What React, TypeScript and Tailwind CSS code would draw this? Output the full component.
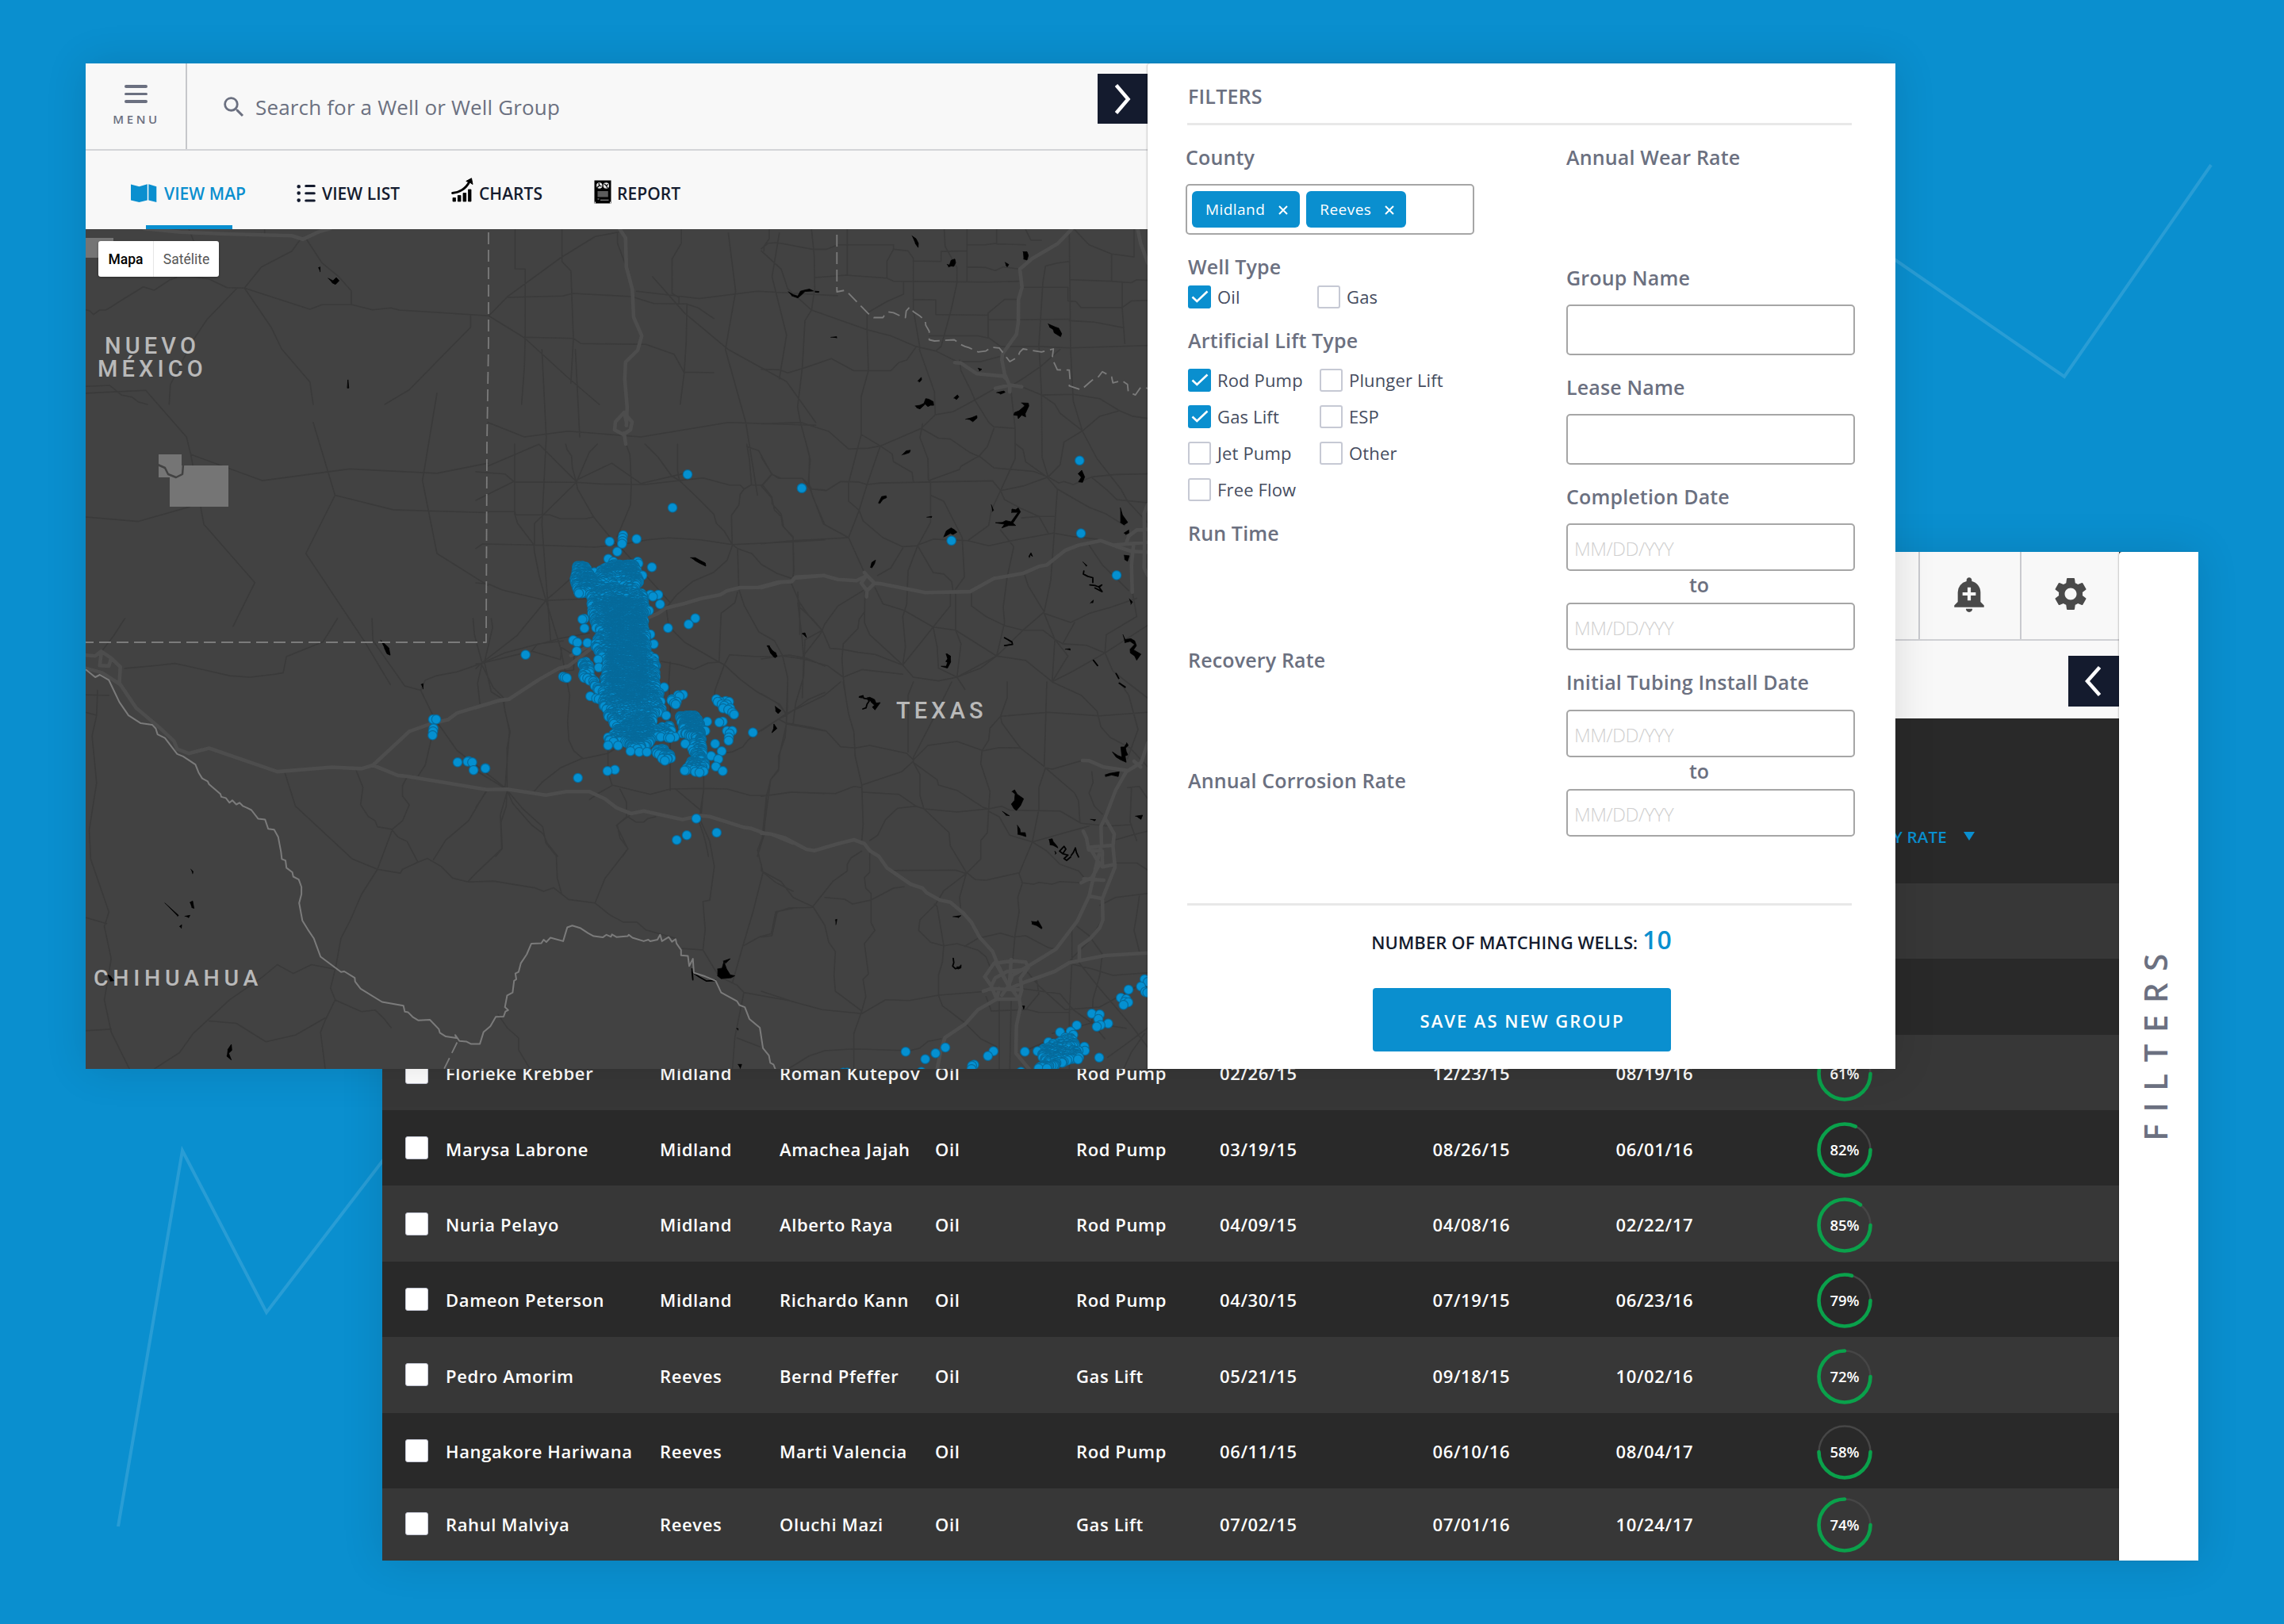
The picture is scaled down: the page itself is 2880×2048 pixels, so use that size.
import { ReactNode } from "react";
import { MdAddAlert, MdSearch, MdSettings } from "react-icons/md";

/* ------------------------------------------------------------------ */
/* Map geometry                                                        */
/* ------------------------------------------------------------------ */

type Pt = [number, number];
// A sheet is a tile of survey coordinates: origin in page pixels and units per pixel.
type Sheet = [number, number, number, number];

const NW: Sheet = [100, 70, 1.96, 3];
const CORE: Sheet = [600, 560, 3, 3];
const SW: Sheet = [100, 780, 1.7422, 2.7034];
const NE: Sheet = [960, 280, 3, 2.6133];
const SE: Sheet = [960, 860, 3, 3];
const PAGE: Sheet = [0, 0, 1, 1];
const WIDE: Sheet = [0, 0, 0.54444, 0.54444];

const parse = (s: string, [ox, oy, sx, sy]: Sheet): Pt[] =>
  s
    .trim()
    .split(/\s+/)
    .map((p) => {
      const [x, y] = p.split(",").map(Number);
      return [ox + x / sx, oy + y / sy];
    });

const toPath = (s: string, sheet: Sheet) =>
  "M" + parse(s, sheet).map(([x, y]) => `${x.toFixed(1)} ${y.toFixed(1)}`).join("L");

const group = (sheet: Sheet, lines: string[]) => lines.map((l) => toPath(l, sheet)).join("");

const MINOR = [
  group(NW, [
    "270,655 285,710 345,770", "545,698 525,740 450,800 408,880 390,880", "563,698 600,785 640,835 672,890 672,942",
    "270,835 320,845 365,878 408,880 570,960 600,943 672,942 725,962 770,955 790,963 967,980 1012,985",
    "16,962 25,965 35,980 50,963 65,963 80,950 100,930 158,875 185,888 225,848 240,840",
    "390,880 315,1000 280,1080 225,1245 222,1320", "408,880 475,1030 500,1110 570,1235 578,1320",
    "967,980 967,1028 815,1265 755,1320", "1012,985 1060,910 1190,765 1275,685 1332,668",
    "1012,985 1100,1068 1205,1215 1285,1320", "1060,915 1195,910 1220,900 1365,912 1420,938 1500,940 1530,955 1568,995",
    "1077,660 1077,807 1102,808 1102,1068 1100,1180 1093,1320", "1193,660 1193,780 1215,815 1221,1070 1215,1240",
    "1100,1066 1221,1070 1240,1090 1400,1093 1470,1130 1495,1200 1485,1320", "1495,1198 1568,1200",
    "1488,660 1488,710 1465,770 1465,900 1482,915 1482,938", "1502,940 1500,1080 1495,1198", "1330,670 1330,710 1352,800",
    "16,1252 75,1248 105,1285 130,1292 145,1310 168,1320", "458,655 458,672",
  ]),
  group(WIDE, [
    "59,270 100,268 128,300 131,312 180,330 240,322 300,325 335,318", "131,312 140,360 175,400 160,430", "215,290 230,340 210,380 250,440 268,470",
    "300,270 290,330 300,380 335,402", "59,355 95,358 130,348", "230,340 270,350 335,352", "335,290 360,300 390,296 440,300 500,290 560,292",
    "335,320 370,305 395,330 420,318 440,332 470,325", "372,240 375,300 372,360 378,440", "395,240 398,300", "448,190 470,215 500,240 540,262 560,290",
    "500,160 505,200 498,240 512,290 520,340", "437,200 480,205 520,200 575,203", "535,160 530,190 540,230 535,260",
  ]),
  group(CORE, [
    "0,105 110,113 145,143 380,145 470,151 640,153 770,138 860,128 960,155 1000,155 1015,170 1040,155 1085,155 1120,115 1155,130 1235,130 1265,170 1320,173",
    "147,0 147,265 158,300 220,382 222,410 240,500 265,590 320,770 340,870 355,950 347,1050 352,1120 370,1160 405,1190",
    "340,0 345,20 362,45 365,90 380,145 385,170 445,275 510,355 560,405 700,560 735,600", "460,0 430,30 380,145 222,300 222,380", "0,213 140,143",
    "40,256 148,256 150,267 280,268 320,283 415,283 447,275", "0,395 25,378 222,382 450,390 560,378 650,362 730,355 850,362 970,380 1200,370 1320,362",
    "570,5 583,40 588,150 585,230 535,350", "640,0 690,50 740,120 770,138 830,195 900,265 910,300 940,330 970,380 990,395 995,550 1015,610 1070,710 1130,745 1160,800 1180,885 1178,1010",
    "763,0 763,100 770,138", "970,380 967,270 995,230 1000,190 1015,170", "1025,0 1035,60 1043,155", "1025,10 1070,25 1120,115", "1250,0 1265,60 1258,140 1275,200 1320,305",
    "1085,155 1120,200 1120,225 1155,265 1165,315 1200,350 1203,480 1195,530 1225,600 1225,720",
    "990,395 1045,415 1080,455 1140,490 1200,510", "970,385 950,440 900,485 820,520 760,570 720,620 730,690 790,750 920,825 940,835 1000,890 1060,935 1150,985 1175,1025",
    "0,525 50,530 100,552 265,592 430,585", "265,590 290,570 380,490", "265,592 155,725 20,830 0,832", "20,830 65,920 105,960 110,1010 130,1090 118,1150 118,1310 140,1360 210,1440 255,1475 270,1510 310,1560",
    "0,850 20,830 110,790 240,755 330,745", "210,785 230,760 320,735 430,715", "210,783 320,815 325,770 372,800 370,855 320,860",
    "990,560 980,600 928,640 920,825", "920,825 880,828 825,852 770,835 700,822", "735,825 730,900 735,1000 735,1310", "920,825 940,835 960,797 1050,803 1120,805 1185,798 1250,810 1320,840",
    "1225,600 1260,650 1310,705 1245,740 1240,880 1210,980 1200,1060", "1320,940 1260,965 1175,1025 1145,1040 1180,1060 1320,1085", "940,835 905,930 900,975",
    "1178,1010 1170,1110 1145,1180 1145,1230 1115,1270 1100,1330 1090,1480 1065,1560", "1145,1040 1060,1095 1030,1120 1010,1145 970,1165 930,1170",
    "405,1190 500,1170 560,1130", "405,1188 320,1225 250,1280 220,1315", "500,1130 500,1240 515,1290 660,1325 735,1305 860,1303 950,1305 1040,1330 1105,1330 1195,1317 1320,1322",
    "515,1292 465,1320 430,1345", "545,1305 570,1355 570,1410 535,1440 545,1490 575,1530 555,1560", "755,1305 850,1385 862,1310 862,1230", "850,1385 845,1430 862,1480 870,1510 880,1560",
    "575,1410 605,1430 635,1430 650,1417 680,1410", "0,1375 40,1315", "118,1310 115,1370 95,1430 100,1530 75,1560", "0,1235 115,1305",
  ]),
  group(SW, [
    "100,0 75,60 45,120", "567,0 535,80 455,130 448,185 430,190 375,200 330,195 245,165 210,153 170,160 100,170", "643,0 645,75 715,230 750,245 780,340 830,450 940,582",
    "750,245 760,210 785,195 830,182 885,152 970,120", "865,0 868,55 885,152 875,220 880,290", "905,0 908,30 890,150 905,250 930,275 945,385 935,580", "775,400 760,500 745,535",
    "452,528 475,640 600,820 655,855 705,868 710,855 745,830 765,818 795,845 820,885 855,898 910,895 1000,918 1020,930 1042,918 1060,940 1075,958 1133,970 1165,1010 1195,1035 1225,1035 1245,1062 1310,1090",
    "608,517 623,575 618,635 635,675 650,690 655,710 685,718 700,745 720,760 743,828", "720,540 710,570 710,605 725,635 710,690 688,718 655,855 620,940 595,1030 575,1090 563,1190 552,1260 562,1300 540,1370 530,1410 540,1535",
    "893,590 855,690 805,755 778,822", "940,590 925,670 928,785 870,870 855,895", "945,595 975,650 1018,710 1025,765 1048,810 1050,885 1060,940", "1210,670 1180,705 1205,785 1155,885 1133,970",
    "40,245 38,330 28,400 38,560 22,720 25,820 65,1000 55,1050 70,1160 55,1300 70,1410 110,1535", "15,1020 60,1040", "15,260 65,262", "15,320 38,330",
    "165,1535 220,1480 250,1415 330,1300 400,1225 435,1180 470,1210 510,1180 560,1195", "285,1372 345,1380 410,1443 475,1420 540,1362", "15,1405 70,1400",
    "562,1300 590,1320 620,1340 650,1335 670,1365 685,1395", "920,1350 940,1395 965,1430 965,1470 990,1535",
    "1370,600 1365,690 1385,760 1395,845 1385,960 1370,965 1375,1060 1370,1130 1325,1125", "1510,600 1500,750 1490,790 1502,865 1480,1000 1457,1120 1435,1240", "1502,865 1530,900 1568,930", "1568,988 1530,1000 1520,1075 1495,1085 1460,1115",
    "1370,1130 1405,1220 1445,1250 1460,1275 1568,1305", "1460,1275 1440,1430 1435,1535", "1445,1430 1495,1460",
  ]),
  group(NE, [
    "0,88 25,70 60,68 195,90 245,90 290,75 500,75 500,90 555,95 575,120 575,290 600,415 598,420", "0,95 75,155 100,220 190,290 400,355 490,375 585,410 660,425 740,460 830,460 915,440", "30,25 30,55 10,80 10,95",
    "190,25 200,110 202,220 190,290 165,325 155,480 137,610 148,660 182,770 180,870 235,995 330,1040", "325,25 325,175", "205,183 320,175 475,185 500,195 860,198 980,195", "500,90 475,130 475,185",
    "400,355 400,300 475,262 538,238 538,198", "400,355 405,490 378,575 378,700 360,760 330,860 330,920 370,950 385,985 460,1040 535,1070 590,1067",
    "0,485 70,487 100,497 155,483 265,450 350,490 490,490 520,463 550,455 585,412", "598,420 655,560 658,635 605,680 450,738 405,745 330,748 255,690 148,660 0,665",
    "575,128 680,130 680,97 778,95", "692,25 695,80 740,150 740,200 718,290 680,410 660,425", "778,25 778,195", "778,75 845,75 890,70 890,25", "778,148 850,150 885,160 915,148 975,155", "890,72 1000,75",
    "575,255 660,257 660,305 858,307", "858,300 920,255 975,255", "858,300 858,380 905,410 1050,410", "635,375 820,375 858,382", "858,322 975,322 1165,320", "1165,30 1170,420 1180,590 1215,690 1270,780 1360,880 1385,920 1460,990",
    "985,215 1160,215 1160,260 1190,262 1210,282 1365,282 1400,260 1460,258", "1170,190 1320,195 1400,200 1420,190 1460,192", "1325,105 1325,195", "1365,200 1365,282 1375,400", "1050,410 1165,415 1460,407", "1165,325 1260,330 1370,348",
    "1185,25 1240,75 1325,105 1410,115 1410,25", "1060,60 1020,60 1000,25", "1165,130 1120,135 1075,145 1065,200 1050,405 1055,480 1060,570 1062,775 1085,840", "1050,480 1000,510 945,540", "1052,480 1130,420",
    "985,543 1060,570 1110,600 1130,630 1215,688 1145,725 1130,800 1085,840", "1062,570 1180,568 1280,582 1355,622 1405,640 1460,647", "1355,622 1280,640 1215,688",
    "750,455 755,490 790,550 810,590 860,660 880,675 960,680", "945,560 960,680 960,780 905,885", "885,548 800,590 725,625 658,635", "610,665 600,710 630,780 632,850 640,855 640,990 590,1070 555,1150 550,1260 535,1300 545,1400 535,1460",
    "378,700 450,738 495,765 500,790 570,825 575,855", "605,680 670,712 715,715 790,760 830,775 880,810 1030,822 1085,840", "880,680 855,740 825,770 755,805 750,815 640,850", "960,730 990,750 1000,790 1080,840 1120,880 1110,1000 1095,1180 1070,1285",
    "0,870 40,830 0,775", "40,830 65,845 155,845 180,865 190,880 245,885 300,855 370,857 400,865 450,860 875,853 905,885 920,915 985,945 1050,970 1085,1025",
    "450,738 400,865 370,950 330,1040 120,1050 0,1060", "0,870 40,910 50,950 75,970 80,1000 120,1040 122,1160", "330,1040 395,1165", "590,1065 600,1080 650,1155 690,1160 720,1185 725,1215", "640,900 690,920 760,1040 768,1170 735,1210",
    "905,885 870,950 860,1000 780,1050", "590,1065 650,1045 780,1050 860,1067 960,1048 1105,1025 1180,1037 1270,1045", "905,885 990,870 1085,840 1125,860 1145,855 1180,865 1250,840 1340,832 1460,830", "1120,880 1240,940 1300,960 1375,1000",
    "1250,842 1310,885 1345,915 1460,925", "905,1015 955,1070 930,1170 915,1270 920,1320 890,1430 740,1500", "985,975 1050,970 1110,970",
    "440,1165 490,1140 535,1075", "430,1205 460,1258 540,1280 650,1335 735,1345 890,1430 1000,1445 1100,1515", "385,1215 290,1265 240,1325 225,1355 150,1440", "392,1220 390,1320 410,1360 535,1460", "390,1285 370,1310 365,1340 310,1390 305,1440 310,1500 320,1568",
    "138,1220 140,1265 195,1310 230,1345 260,1405 305,1408 365,1418 430,1425 535,1460 575,1500 670,1512 740,1500 830,1470 890,1430", "138,1255 155,1380 160,1440 155,1568", "0,1440 80,1430 160,1440 250,1462 310,1500 380,1475 535,1490",
    "715,1225 715,1265 650,1335 535,1460", "735,1225 735,1345 755,1390 740,1500", "650,1335 665,1400 670,1470 740,1500 770,1540", "795,1225 795,1265 850,1300 920,1330 990,1345 1065,1345 1110,1375 1140,1390 1230,1395 1300,1420",
    "995,1160 1010,1200 1070,1285 990,1345 890,1430", "1070,1290 1110,1375 1160,1430 1100,1515 1110,1380", "1070,1290 1170,1320 1240,1290 1320,1270 1420,1240", "1140,1390 1185,1320", "1460,1330 1300,1420 1305,1360 1420,1300 1405,1225",
    "1300,1420 1330,1480 1460,1568", "1300,1420 1180,1480 1100,1515", "1240,1065 1290,1130 1390,1215",
  ]),
  group(SE, [
    "0,45 60,80 95,120 100,0", "0,185 95,120 240,50 300,0", "95,120 95,155 190,172 245,185 300,245 355,250 410,240 550,270 575,295 600,270 630,240 740,225 840,260 900,248 980,250", "310,0 330,120 350,190 355,280 380,390 385,540 380,600",
    "95,160 70,270 65,335 35,370 10,560", "555,265 555,50 575,0", "720,0 650,140 575,285 575,305 600,350 600,430 615,480", "575,305 665,370 670,390 740,410 840,475 860,480 910,470 940,485 1130,488 1210,535 1310,545 1400,540",
    "0,433 110,417 280,422 350,395 380,400", "380,390 530,340 575,300", "385,417 520,425 585,470 615,480 740,492 860,480", "615,480 710,570 715,620 775,720 810,748 850,750 975,722",
    "585,470 515,478 470,520 440,580 410,600", "860,480 855,570 830,600 830,670 775,725 690,790 660,840 600,900 595,940 640,985 690,998", "775,725 750,815 755,870", "930,0 930,60 905,130 910,155 980,250 1070,320 1080,0",
    "905,130 865,175 860,220 835,260 830,310 865,415 860,480", "905,130 1085,115 1280,128 1460,115", "1100,0 1210,50 1270,110 1285,170 1320,210 1395,250 1460,320", "1355,0 1390,50 1425,180 1385,290", "1075,325 1050,400 1050,480 1025,605 975,725 988,760 970,815 975,870 960,955 950,1060",
    "1075,325 1100,330 1215,297", "1075,325 1185,420 1200,450 1205,530", "860,490 900,510 940,580 1025,605 1080,640 1130,690 1200,715 1225,745", "1025,605 1150,570 1240,545", "985,760 1030,765 1050,758 1100,765 1130,755 1210,760",
    "500,713 735,712 775,725", "0,690 0,715 75,755 120,815 195,850 240,920 255,985 280,1020 275,1110 280,1170 380,1245", "195,850 270,755 325,715 325,690 340,665 380,640", "410,640 410,720 390,740 395,780 415,800 415,910 430,940 390,990 405,1105 385,1125 395,1190 380,1245",
    "240,815 315,822 345,840 415,825 500,780 540,775", "195,853 105,855 60,870 40,960 0,965", "690,998 665,850 655,840", "690,998 740,990 820,1015 850,1040 870,1090", "690,998 685,1060 670,1110 670,1185 685,1225 770,1290 830,1350 890,1380",
    "770,1000 820,970 905,950 955,965 1000,960 1085,1005 1110,1010", "0,1170 120,1210 230,1240 380,1255 470,1202 560,1205 670,1185 860,1170", "380,1245 350,1330 350,1465", "100,1465 180,1415 240,1395 350,1388 560,1395 600,1385 630,1360 680,1350",
    "1250,340 1255,380 1240,420 1260,470 1290,500", "1340,685 1420,685 1460,710", "1330,600 1400,580 1460,565", "1280,845 1340,815 1460,800", "1430,810 1420,880 1410,940 1430,1020", "1290,900 1240,980 1170,1050",
    "1175,930 1175,1060 1165,1260 1165,1465", "1195,925 1240,960 1290,1030 1280,1110 1255,1200 1250,1290", "1165,1065 1250,1085 1330,1110 1460,1100", "1200,1060 1280,1160 1400,1300 1460,1380", "985,1160 1130,1180 1180,1240 1250,1290 1300,1350",
    "1040,1120 1050,1180 1000,1240 870,1245 850,1190", "900,1210 900,1465", "945,1205 940,1465", "1000,1090 1050,1150 1150,1240 1280,1230 1460,1130", "1165,1250 1050,1250 990,1235", "1100,1330 1250,1290 1380,1310", "1310,1420 1380,1370 1460,1310", "1370,1465 1400,1400 1450,1330", "1010,1390 1100,1350",
    "1400,400 1395,530 1420,600", "1385,400 1430,395 1460,440",
  ]),
].join("");

const HIGHWAYS = [
  group(NW, ["160,655 250,668 360,675 525,682 553,695 595,665 620,655", "1335,655 1350,690 1352,800 1367,885 1370,990 1390,1060 1380,1115 1350,1160 1348,1225 1354,1330 1352,1400"]),
  group(PAGE, ["790,533 787,520 776,532 775,542 786,548 795,542 797,532 790,524", "787,546 789,560"]),
  group(NE, [
    "1172,25 1120,72 1025,120 978,155 986,215 973,255 972,330 965,370 912,435 910,455 920,500 940,540 940,560", "732,463 755,465 815,500 915,508 925,515", "885,548 940,537 985,543", "1424,25 1435,70 1462,135",
    "0,1205 75,1187 115,1185 130,1170 235,1165 290,1178 360,1182 400,1165", "390,1155 400,1165 428,1190 400,1215 378,1190 395,1168", "400,1210 398,1235",
    "425,1190 450,1192 620,1221 790,1218 880,1175 990,1158 1050,1135 1080,1130 1150,1082 1200,1065 1285,1050 1340,1068 1400,1085 1460,1088", "1330,1065 1462,1055", "1380,1060 1390,1035 1420,1015 1462,1013", "1462,930 1448,960 1450,1050 1448,1140 1462,1165", "1408,1065 1400,1130 1403,1220",
  ]),
  group(CORE, ["1320,497 1205,507 1195,520 1145,522 1070,542 1000,543 950,555 925,570 850,585 790,603 720,620 690,640 600,680 500,730 435,775 370,825 350,840 315,848 240,890 125,965 95,968 0,997", "360,800 435,760"]),
  group(SW, [
    "945,275 920,280 830,322 810,345 770,360 725,385 645,500", "15,125 35,128 48,112 70,135 90,165 88,220 125,305 175,370 208,418 215,445 240,460 265,450 285,442 435,522 555,507 620,512 645,500 700,535 720,538 895,583 940,582 1025,602 1070,590 1120,590 1155,615 1180,645 1212,665 1240,656 1325,685 1365,672 1385,675 1460,712 1475,715 1505,732 1520,735 1568,765",
    "48,120 45,160 65,162 70,135", "15,170 50,185 90,225",
  ]),
  group(SE, [
    "0,572 35,575 90,590 170,633 200,638 290,612 350,597 390,612 410,638 445,660 475,703 565,765 610,780 625,797 675,825 715,833 765,875 795,910 825,965 875,1020 895,1070 935,1150",
    "1462,230 1437,305 1380,340 1340,410 1300,515 1285,545 1287,620 1270,680 1240,810 1195,905 1115,1010 1010,1075 950,1110 935,1150", "1215,297 1240,298 1295,322 1385,335", "1410,300 1435,322",
    "1300,515 1335,575 1330,620 1338,700 1310,770 1290,820 1292,900 1280,930 1245,970 1203,1000 1203,1050", "1218,565 1230,590 1238,635 1290,640 1290,700 1338,690", "1245,625 1330,618", "1250,640 1280,690 1250,740 1210,760", "1220,745 1295,750", "1240,810 1290,820",
    "1462,1025 1300,1035 1165,1062 1110,1095 985,1140 940,1160", "840,1170 870,1160 975,1165", "845,1115 880,1065 950,1055 1000,1060 1010,1080 980,1120 985,1165 975,1200 890,1200 870,1150 845,1115", "870,1150 885,1120 930,1095 980,1090", "945,1050 938,1150 975,1200", "885,1060 935,1150 910,1185",
    "900,1160 890,1200 820,1240 770,1295 695,1345 680,1390 665,1465", "975,1195 980,1230 965,1300 963,1405 1018,1470",
  ]),
].join("");

const RIVER = toPath(
  "15,175 35,200 45,192 65,210 88,285 108,330 135,357 160,362 168,375 172,395 188,407 215,462 228,470 255,498 262,525 270,545 282,555 285,565 310,598 312,608 322,612 330,628 336,620 345,634 352,628 360,640 368,645 378,653 393,683 408,685 415,717 428,720 437,745 443,795 445,820 453,825 455,850 468,865 470,880 482,890 488,915 488,940 483,970 490,1030 502,1060 515,1090 530,1153 575,1205 582,1203 605,1225 606,1238 618,1262 665,1307 712,1320 715,1340 722,1342 732,1358 745,1370 770,1368 790,1400 792,1412 805,1425 828,1430 826,1420 835,1440 850,1442 860,1450 880,1450 888,1410 903,1390 915,1358 932,1357 936,1340 942,1335 935,1325 940,1285 952,1275 955,1235 960,1230 958,1210 965,1205 970,1175 983,1145 993,1108 1015,1107 1020,1095 1026,1103 1035,1088 1063,1100 1072,1053 1083,1047 1100,1055 1118,1073 1130,1083 1150,1087 1158,1078 1168,1085 1170,1077 1180,1086 1205,1083 1207,1078 1215,1088 1240,1100 1250,1095 1254,1100 1270,1095 1276,1078 1280,1100 1295,1086 1302,1102 1310,1093 1312,1108 1322,1130 1322,1148 1337,1150 1340,1185 1348,1160 1350,1208 1375,1220 1398,1235 1410,1275 1445,1305 1450,1318 1462,1325 1472,1365 1495,1395 1502,1465 1515,1490 1518,1515 1525,1520 1530,1540",
  SW,
);

const BORDER = [
  toPath("616,293 616,430 614,560 613,810 108,810", PAGE),
  toPath("830,1445 800,1540", SW),
  toPath("286,42 286,230 315,225 330,235 405,302 425,315 460,315 465,308 480,296 500,299 520,307 535,314 545,315 548,293 562,280 575,295 600,310 620,325 622,340 635,360 635,388 655,392 690,390 730,388 755,404 770,410 785,414 820,428 850,425 870,413 900,415 940,460 970,445 978,428 990,418 1060,428 1105,418 1100,450 1120,487 1165,488 1168,520 1165,540 1210,553 1240,530 1260,515 1275,510 1290,493 1325,510 1330,530 1365,523 1385,535 1388,560 1415,570 1435,545 1462,548", NE),
].join("");

const LAKES = [
  group(NW, ["591,803 595,800 595,818", "615,843 627,852 635,840 642,852 633,866 625,860", "664,1228 666,1258 663,1258"]),
  group(NE, [
    "570,46 585,55 594,70 593,84 582,70", "703,140 712,142 718,126 732,122 735,134 728,146 718,145 708,148", "922,133 936,140 930,148 925,142", "990,98 1005,98 1010,110 1005,125 992,122", "102,230 122,240 138,244 148,228 165,224 182,221 197,227 165,229 152,240 138,250 115,243", "203,228 218,229 217,232 204,231",
    "263,380 285,378 285,382", "1085,336 1112,346 1125,350 1136,368 1132,378 1108,365 1104,354 1090,346", "820,482 834,485 825,491", "592,524 605,512 606,520 598,528", "582,606 600,604 615,598 622,582 634,584 650,592 652,604 640,604 630,608 620,600 600,616 588,612", "728,580 742,570 747,576 738,585", "890,562 918,557 922,561 905,567", "984,596 1010,597 1012,606 998,632 1000,642 985,636 972,648 970,638 955,636 958,628 975,622 996,606",
    "773,650 795,645 815,638 816,646 800,658 790,652", "532,768 548,754 564,752 560,760 540,766", "1198,830 1212,818 1223,840 1215,858 1200,856 1210,842", "443,926 455,905 472,902 474,908 460,914 448,928", "870,932 878,950 874,954", "947,958 948,946 962,948 972,942 980,955 965,975 952,992 962,1000 935,1000 910,1008 920,996 886,991 912,990 925,984 945,988 970,958", "690,1038 700,1018 718,1008 730,1014 740,1022 725,1030 715,1026 695,1036", "626,973 645,970 643,974",
    "1358,942 1366,965 1386,990 1372,998 1358,990", "1372,1025 1390,1015 1390,1025 1378,1030", "1372,1098 1392,1100 1385,1118 1374,1112", "1012,1102 1020,1090 1026,1102 1018,1096 1014,1106", "1216,1120 1232,1132 1228,1134", "1392,1242 1404,1252 1398,1260",
    "1244,1256 1256,1246 1254,1255",
    "413,1138 418,1122 432,1114 428,1126 418,1140", "155,1356 165,1354 170,1368", "22,1396 30,1398 40,1410 60,1430 52,1436 34,1420", "698,1424 715,1430 716,1450 704,1470 680,1464 700,1464 706,1446", "1150,1408 1168,1406 1168,1411", "1368,1360 1376,1376 1398,1373 1412,1380 1419,1396 1408,1410 1436,1424 1420,1444 1412,1430 1396,1420 1395,1408 1412,1392 1395,1382 1375,1386", "370,1566 385,1560 388,1568",
  ]),
  group(CORE, ["812,430 830,430 852,442 868,450 870,462 845,450 828,440", "1102,765 1110,762 1114,778 1135,790 1139,804 1128,806 1115,790 1110,776", "1235,718 1244,716 1250,731", "1132,992 1145,1002 1154,1008 1144,1020 1134,1010", "1128,1060 1139,1076 1120,1092 1126,1078"]),
  group(SW, ["662,75 672,88 680,100 683,125 676,120 670,100", "751,225 755,222 755,240", "245,855 250,862 249,870", "243,968 249,963 252,988 247,985", "188,970 218,1012 216,1015", "232,1015 243,1012 240,1020", "220,1050 225,1044 224,1056", "62,1215 68,1218 76,1235 68,1236", "326,1470 334,1452 335,1472 328,1482 334,1505 324,1492", "1402,1195 1412,1192 1416,1170 1422,1195 1430,1215 1440,1218 1432,1225 1410,1228 1402,1218", "1447,1520 1455,1520 1452,1534", "1444,1398 1447,1398 1447,1403", "1415,1168 1430,1160 1420,1175"]),
  group(SE, [
    "370,55 385,52 378,60", "400,60 410,58 428,66 434,80 450,78 430,106 420,95 428,88 415,76", "1382,230 1388,240 1378,250 1380,262 1386,276 1376,280 1380,304 1358,294 1342,284 1328,265 1348,278 1364,284 1360,246 1372,246", "1300,352 1318,346 1354,340 1350,358 1325,352 1302,358", "948,415 958,408 968,425 992,442 980,468 965,486 956,480 946,462 958,448 960,425", "912,490 938,506 925,504", "968,542 978,556 980,570 998,570 1001,585 985,580 970,576", "1088,596 1100,593 1104,604 1118,620 1122,628 1104,618 1092,616",
    "1110,640 1116,648 1112,652", "1022,906 1042,908 1046,902 1062,930 1060,934 1042,922 1024,916", "725,888 755,884 745,892", "280,900 286,898 282,918", "1245,520 1265,521 1260,526", "1415,508 1442,504 1436,520 1425,512", "988,1226 996,1226 992,1238", "740,1078 748,1078 756,1070 755,1082 745,1086",
  ]),
].join("Z") + "Z";

const CREEKS = [
  group(SE, [
    "1138,648 1128,640 1145,622 1152,632 1140,650 1160,655 1145,668 1155,675 1170,662", "1172,656 1180,646 1188,628 1192,645 1200,662", "726,1046 728,1062 724,1075 734,1085 745,1082", "1356,6 1376,20",
    "388,62 402,64 408,72 400,84 396,98 384,102",
  ]),
  group(SW, ["1346,1195 1348,1232 1346,1205 1362,1222 1378,1236 1398,1234"]),
  group(NE, [
    "1220,1150 1218,1160 1235,1168 1254,1172 1254,1188", "1243,1196 1262,1198 1275,1202 1288,1196 1278,1204 1289,1218 1262,1206", "920,1370 948,1384 950,1392 920,1396", "702,1424 714,1432 700,1448 714,1448", "1256,1444 1272,1462", "1342,1488 1352,1504", "1354,1520 1376,1532",
  ]),
].join("");

/* ------------------------------------------------------------------ */
/* Wells                                                               */
/* ------------------------------------------------------------------ */

const SINGLE_WELLS: Pt[] = [
  ...parse("801,115 1233,167 744,241 506,369 608,359 557,345 555,355 555,367 553,377 535,407 501,434 520,445 612,445 615,452 666,466 630,497 690,570 670,577 697,606 660,570 830,659 805,682 727,696 410,661 403,663 411,697 368,742 384,751 422,752 382,783 188,797 330,880 336,883 344,885 390,565 397,465 660,720 673,757 712,920 784,948 765,950 742,965 756,985 760,975 770,955 740,970 750,980 910,965 925,975 945,972 958,975 940,990 955,1005 970,1015 977,1023 930,985 935,1000 950,985 962,1000 915,975 934,1050 921,1053 950,1085 970,1085 960,1095 957,1110 956,1122 1048,1091 905,1134 930,1162 890,1180 917,1192 908,1220 934,1237 727,1111 735,1112 753,1108 780,1094 700,1108 662,1105 500,1140 538,1141 585,1162 618,1165 647,1165 705,1155 685,1170 725,1175 738,1188 715,1198 526,1232 498,1237 386,1263 834,1417 911,1470 798,1480 760,1498 36,1226 792,1134 720,1027 678,1015 868,1085 875,1050 790,1235 830,1240 862,1238 846,1243 705,1070 730,1065 433,954 455,962 465,965 410,840 413,852 410,885 430,895 447,905 463,815 465,845 440,640 455,695 675,810 655,630 520,525 550,510 605,535 603,545 470,540 448,485 500,1110", CORE),
  ...parse("777,344 784,344 778,375 777,385 776,398 831,490 853,488 863,490 855,486 866,517 892,511", SW),
  ...parse("1204,786 153,877 719,1050 1209,1026 1344,1164", NE),
  ...parse("1389,1164 1450,1125 1462,1135 1436,1152 1452,1172 1460,1175 1360,1195 1380,1200 1388,1212 1375,1210 1370,1222 1250,1255 1280,1258 1275,1275 1312,1292 1283,1298 1269,1304 1193,1299 1130,1325 1170,1322 1180,1335 1150,1345 1086,1363 1045,1397 997,1399 1224,1395 1222,1380 1278,1421 1198,1428 1157,1432 1110,1450 1062,1455 696,1383 659,1405 620,1427 546,1399 878,1397 857,1415 797,1452 805,1448 795,1465 605,1475 310,1478 325,1478 982,1475", SE),
];

// Densely drilled leases, filled with `count` wells each.
const FIELDS: { outline: Pt[]; count: number }[] = [
  { outline: parse("430,562 520,545 630,562 645,640 638,690 645,720 650,790 682,830 680,900 695,940 705,1010 670,1030 668,1100 640,1140 600,1148 565,1130 550,1100 530,1070 500,1030 480,1000 475,960 485,900 495,830 448,760 468,720 445,660", CORE), count: 2600 },
  { outline: parse("480,590 630,600 635,700 640,800 650,960 600,1000 540,980 500,900 500,760", CORE), count: 2400 },
  { outline: parse("382,460 415,460 430,490 475,540 440,555 400,570 385,560 372,510", CORE), count: 260 },
  { outline: parse("465,475 520,455 600,455 615,490 618,525 600,535 540,490 480,520", CORE), count: 300 },
  { outline: parse("510,460 600,460 600,560 440,570 440,520", CORE), count: 180 },
  { outline: parse("560,1060 660,1040 672,1100 650,1145 600,1155 560,1130 500,1125 510,1105", CORE), count: 300 },
  { outline: parse("770,1028 830,1025 850,1060 855,1130 840,1120 790,1095", CORE), count: 320 },
  { outline: parse("820,1120 855,1130 862,1180 870,1235 795,1235 800,1210 830,1190 815,1160", CORE), count: 110 },
  { outline: parse("660,1085 735,1065 745,1105 665,1110", CORE), count: 50 },
  { outline: parse("672,1160 710,1150 745,1180 715,1200", CORE), count: 45 },
  { outline: parse("400,820 425,820 435,870 470,920 480,960 440,900 405,880", CORE), count: 45 },
  { outline: parse("1120,1360 1170,1345 1200,1380 1205,1420 1140,1440 1080,1462 1045,1462 1080,1440 1055,1415 1065,1385", SE), count: 230 },
];

function inside([x, y]: Pt, poly: Pt[]) {
  let hit = false;
  for (let i = 0, j = poly.length - 1; i < poly.length; j = i++) {
    const [xi, yi] = poly[i];
    const [xj, yj] = poly[j];
    if (yi > y !== yj > y && x < ((xj - xi) * (y - yi)) / (yj - yi) + xi) hit = !hit;
  }
  return hit;
}

function drill(): Pt[] {
  let seed = 7;
  const rnd = () => {
    seed = (seed * 16807) % 2147483647;
    return seed / 2147483647;
  };
  const out: Pt[] = [...SINGLE_WELLS];
  for (const { outline, count } of FIELDS) {
    const xs = outline.map((p) => p[0]);
    const ys = outline.map((p) => p[1]);
    const [x0, x1, y0, y1] = [Math.min(...xs), Math.max(...xs), Math.min(...ys), Math.max(...ys)];
    let n = 0;
    while (n < count) {
      const p: Pt = [x0 + rnd() * (x1 - x0), y0 + rnd() * (y1 - y0)];
      if (inside(p, outline)) {
        out.push(p);
        n++;
      }
    }
  }
  return out.sort((a, b) => a[1] - b[1]);
}

const WELLS = drill();

function WellMap() {
  return (
    <svg className="block h-full w-full" viewBox="108 289 1340 1059" fill="none" strokeLinejoin="round" strokeLinecap="round">
      <defs>
        <radialGradient id="well">
          <stop offset="0.66" stopColor="#0490d1" />
          <stop offset="0.84" stopColor="#05699a" />
          <stop offset="1" stopColor="#05699a" stopOpacity="0" />
        </radialGradient>
      </defs>
      <path d={MINOR} stroke="#3a3a3a" strokeWidth="1.6" />
      <path d={HIGHWAYS} stroke="#4d4d4d" strokeWidth="4.6" />
      <g fill="#757575">
        <path d="M108 300H143V325H108Z" />
        <path d="M200 573H229V587H288V639H214V602H200Z" />
        <path d="M199 586L208 590L212 598L222 602L230 598L231 586" stroke="#424242" strokeWidth="2.5" fill="none" />
      </g>
      <path d={LAKES} fill="#000" stroke="#000" strokeWidth="0.8" />
      <path d={CREEKS} stroke="#000" strokeWidth="1.8" />
      <path d={BORDER} stroke="#7b7b7b" strokeWidth="1.8" strokeDasharray="15 7" strokeLinecap="butt" />
      <path d={RIVER} stroke="#7b7b7b" strokeWidth="2" />
      {WELLS.map(([x, y], i) => (
        <circle key={i} cx={x.toFixed(1)} cy={y.toFixed(1)} r="6.8" fill="url(#well)" />
      ))}
    </svg>
  );
}

/* ------------------------------------------------------------------ */
/* Icons                                                               */
/* ------------------------------------------------------------------ */

const MapIcon = () => (
  <svg className="h-[24px] w-[33px]" viewBox="0 0 33 24" fill="#0a8fcf">
    <path d="M0 .5L10.500 3.200L20.800 .3V20.400L10.500 23L0 20.400Z" />
    <path d="M22.300 .3L32.300 3.200V23L22.300 20.400Z" />
  </svg>
);

const ListIcon = () => (
  <svg className="h-[24px] w-[24px]" viewBox="0 0 24 24" fill="none" stroke="#141b2e" strokeLinecap="round">
    <path d="M2.700 3.200h.01M2.700 11.500h.01M2.700 20.600h.01" strokeWidth="4.600" />
    <path d="M11.700 2.600H22.300M11.700 11.800H22.300M11.700 21H22.300" strokeWidth="3" />
  </svg>
);

const ChartIcon = () => (
  <svg className="h-[31px] w-[28px]" viewBox="0 0 28 31" fill="#000">
    <path d="M2 25.500h3.500v4.500H2zM8.300 22.500h3.700v7.500H8.300zM15 19.500H18.700V30H15zM21.500 15H25V30h-3.500z" stroke="#000" strokeWidth=".8" strokeLinejoin="round" />
    <path d="M1.500 19.500C10 19 18.500 14 23 5" fill="none" stroke="#000" strokeWidth="2.800" strokeLinecap="round" />
    <path d="M18.800 4.500L25.500 .8L27 8.500L23.500 6Z" stroke="#000" strokeLinejoin="round" />
  </svg>
);

const ReportIcon = () => (
  <svg className="h-[30px] w-[22px]" viewBox="0 0 22 30">
    <path d="M.5.500H21.500V29.500H.500Z" fill="#000" />
    <path d="M1.500 29.500V27.500M20.500 29.500V27.500" stroke="#f8f8f8" strokeWidth="1" />
    <circle cx="6.800" cy="7" r="3.700" fill="#e4e4e4" />
    <circle cx="15.400" cy="7" r="3.700" fill="#e4e4e4" />
    <path d="M6.800 7L4 9.500M6.800 7L9.500 8M6.800 7L6 4M15.400 7L13 5M15.400 7L17 10M15.400 7L18 5.500" stroke="#000" strokeWidth="1.200" />
    <path d="M4.500 14H17.800V21.500H4.500Z" fill="#5c5c5c" />
    <path d="M4.500 24H6.500M8 25.200H18.500" stroke="#aaa" strokeWidth="1.100" />
  </svg>
);

const CloseIcon = () => (
  <svg className="h-[12px] w-[12px]" viewBox="0 0 12 12" stroke="#fff" strokeWidth="2">
    <path d="M1 1L11 11M11 1L1 11" />
  </svg>
);

/* ------------------------------------------------------------------ */
/* Front window                                                        */
/* ------------------------------------------------------------------ */

const NavItem = ({ icon, label, className }: { icon: ReactNode; label: string; className: string }) => (
  <div className={`flex items-center text-[21px] leading-[30px] font-semibold tracking-[0.05px] ${className}`}>
    {icon}
    <span>{label}</span>
  </div>
);

const Label = ({ children, className }: { children: ReactNode; className: string }) => (
  <div className={`h-[36px] text-[25px] leading-[35px] font-semibold tracking-[0.16px] whitespace-nowrap text-[#6b7080] ${className}`}>{children}</div>
);

const Check = ({ label, on }: { label: string; on?: boolean }) => (
  <div className="flex h-[29px] items-center">
    {on ? (
      <div className="flex h-[29px] w-[29px] items-center justify-center rounded-[3px] bg-[#0a8fcf]">
        <svg className="h-[17px] w-[22px]" viewBox="0 0 22 17" fill="none" stroke="#fff" strokeWidth="2.600">
          <path d="M1.500 8.500L7.300 14L20.500 1.500" />
        </svg>
      </div>
    ) : (
      <div className="h-[29px] w-[29px] rounded-[3px] border-[2px] border-[#c6c9d4] bg-white" />
    )}
    <span className="ml-[8px] text-[22px] leading-[29px] tracking-[0.15px] whitespace-nowrap text-[#454c5e]">{label}</span>
  </div>
);

const Chip = ({ label }: { label: string }) => (
  <div className="flex h-[46px] items-center rounded-[6px] bg-[#0a8fcf] pr-[15px] pl-[17px] text-[19px] tracking-[0.45px] text-white">
    <span className="leading-[45px]">{label}</span>
    <span className="ml-[17px] pt-[2px]">
      <CloseIcon />
    </span>
  </div>
);

const Field = ({ placeholder, className }: { placeholder?: string; className: string }) => (
  <div className={`w-[364px] rounded-[5px] border-[2px] border-[#a6a6a6] bg-white pl-[8px] text-[24px] leading-[60px] font-light tracking-[-0.5px] text-[#cfcfcf] ${className}`}>{placeholder}</div>
);

const To = () => <div className="h-[40px] pr-[29px] text-center text-[25px] leading-[35px] font-semibold text-[#6b7080]">to</div>;

function FilterPanel() {
  return (
    <div className="relative flex w-[943px] flex-col rounded-tl-[4px] bg-white shadow-[-1px_0_2px_rgba(0,0,0,0.2)]">
      <div className="mr-[55px] ml-[50px] h-[78px] border-b-[3px] border-[#e8e8e8] pl-[1px] text-[25px] leading-[82px] font-semibold tracking-[0.2px] text-[#6b7080]">FILTERS</div>
      <div className="flex h-[981px] pl-[48px]">
        <div className="w-[480px] pt-[23px]">
          <Label className="">County</Label>
          <div className="mt-[15px] flex h-[64px] w-[364px] items-center gap-[8px] rounded-[5px] border-[2px] border-[#a6a6a6] pl-[6px]">
            <Chip label="Midland" />
            <Chip label="Reeves" />
          </div>
          <Label className="mt-[23px] ml-[3px]">Well Type</Label>
          <div className="mt-[5px] ml-[3px] grid grid-cols-[163px_auto]">
            <Check label="Oil" on />
            <Check label="Gas" />
          </div>
          <Label className="mt-[23px] ml-[3px]">Artificial Lift Type</Label>
          <div className="mt-[17px] ml-[3px] grid grid-cols-[166px_auto] gap-y-[17px]">
            <Check label="Rod Pump" on />
            <Check label="Plunger Lift" />
            <Check label="Gas Lift" on />
            <Check label="ESP" />
            <Check label="Jet Pump" />
            <Check label="Other" />
            <Check label="Free Flow" />
          </div>
          <Label className="mt-[23px] ml-[3px]">Run Time</Label>
          <Label className="mt-[124px] ml-[3px]">Recovery Rate</Label>
          <Label className="mt-[116px] ml-[3px]">Annual Corrosion Rate</Label>
        </div>
        <div className="w-[364px] pt-[23px]">
          <Label className="">Annual Wear Rate</Label>
          <Label className="mt-[116px]">Group Name</Label>
          <Field className="mt-[15px] h-[64px]" />
          <Label className="mt-[23px]">Lease Name</Label>
          <Field className="mt-[15px] h-[64px]" />
          <Label className="mt-[23px]">Completion Date</Label>
          <Field className="mt-[15px] h-[60px]" placeholder="MM/DD/YYY" />
          <To />
          <Field className="h-[60px]" placeholder="MM/DD/YYY" />
          <Label className="mt-[23px]">Initial Tubing Install Date</Label>
          <Field className="mt-[16px] h-[60px]" placeholder="MM/DD/YYY" />
          <To />
          <Field className="h-[60px]" placeholder="MM/DD/YYY" />
        </div>
      </div>
      <div className="mr-[55px] ml-[50px] h-[3px] bg-[#e8e8e8]" />
      <div className="flex h-[104px] justify-center pt-[20px] text-[22px] font-semibold tracking-[0.1px] text-[#141b2e]">
        <div className="leading-[46px]">
          NUMBER OF MATCHING WELLS: <span className="text-[32px] text-[#0a8fcf]">10</span>
        </div>
      </div>
      <div className="flex justify-center">
        <div className="h-[80px] w-[376px] rounded-[4px] bg-[#0a8fcf] pl-[2px] text-center text-[22px] leading-[82px] font-semibold tracking-[2px] text-white">SAVE AS NEW GROUP</div>
      </div>
    </div>
  );
}

function MapWindow() {
  return (
    <div className="absolute top-[80px] left-[108px] flex h-[1268px] w-[2282px] bg-[#f8f8f8] shadow-[0_0_50px_rgba(0,0,0,0.12)]">
      <div className="flex w-[1339px] flex-col">
        <div className="flex h-[110px] border-b-[2px] border-[#d4d5d8]">
          <div className="flex w-[128px] flex-col items-center border-r-[2px] border-[#c6c7cb]">
            <div className="mt-[27px] flex w-[29px] flex-col gap-[6px]">
              <div className="h-[3.5px] rounded-full bg-[#6b7080]" />
              <div className="h-[3.5px] rounded-full bg-[#6b7080]" />
              <div className="h-[3.5px] rounded-full bg-[#6b7080]" />
            </div>
            <div className="mt-[9px] pl-[2px] text-[15px] leading-[22px] font-semibold tracking-[3.6px] text-[#6b7080]">MENU</div>
          </div>
          <div className="flex flex-1 items-center pl-[42px] text-[26px] tracking-[0.16px] text-[#6b7080]">
            <MdSearch className="mt-[2px] size-[34px]" />
            <span className="ml-[10px] pt-[2px] leading-[36px]">Search for a Well or Well Group</span>
          </div>
          <div className="mt-[13px] flex h-[63px] w-[63px] items-center justify-center bg-[#141b2e]">
            <svg className="h-[38px] w-[20px]" viewBox="0 0 20 38" fill="none" stroke="#fff" strokeWidth="4.5">
              <path d="M1.500 1.500L16.500 19L1.500 36.500" />
            </svg>
          </div>
        </div>
        <div className="relative flex h-[99px] items-center pt-[9px] pl-[57px] text-[#141b2e]">
          <NavItem className="w-[209px] gap-[9px] text-[#0a8fcf]" icon={<MapIcon />} label="VIEW MAP" />
          <NavItem className="w-[195px] gap-[8px]" icon={<ListIcon />} label="VIEW LIST" />
          <NavItem className="w-[180px] gap-[7px]" icon={<span className="-mt-[10px]"><ChartIcon /></span>} label="CHARTS" />
          <NavItem className="gap-[7px]" icon={<span className="-mt-[5px]"><ReportIcon /></span>} label="REPORT" />
          <div className="absolute bottom-0 left-[76px] h-[5px] w-[109px] bg-[#0a8fcf]" />
        </div>
        <div className="relative h-[1059px] w-[1340px] overflow-hidden bg-[#424242] font-['Roboto',sans-serif]">
          <WellMap />
          <div className="absolute top-[15px] left-[16px] flex h-[45px] w-[152px] rounded-[3px] bg-white text-[17.5px] leading-[46px] shadow-[0_1px_3px_rgba(0,0,0,0.35)]">
            <div className="w-[70px] border-r border-[#e6e6e6] text-center font-medium text-black">Mapa</div>
            <div className="flex-1 text-center text-[#565656]">Satélite</div>
          </div>
          <div className="absolute top-[133px] left-[14px] w-[140px] text-center text-[29px] leading-[29px] font-medium tracking-[5.1px] text-[#b9b9b9]">
            NUEVO
            <br />
            MÉXICO
          </div>
          <div className="absolute top-[593px] left-[1022px] text-[29px] leading-[29px] font-medium tracking-[5.1px] text-[#b9b9b9]">TEXAS</div>
          <div className="absolute top-[930px] left-[10px] text-[28.5px] leading-[29px] font-medium tracking-[5.7px] text-[#b9b9b9]">CHIHUAHUA</div>
        </div>
      </div>
      <FilterPanel />
    </div>
  );
}

/* ------------------------------------------------------------------ */
/* Back window                                                         */
/* ------------------------------------------------------------------ */

// The last entry is the part of the ring that is drawn, clockwise from three o'clock.
const ROWS = [
  ["Florieke Krebber", "Midland", "Roman Kutepov", "Rod Pump", "02/26/15", "12/23/15", "08/19/16", 61, 0.61],
  ["Marysa Labrone", "Midland", "Amachea Jajah", "Rod Pump", "03/19/15", "08/26/15", "06/01/16", 82, 0.82],
  ["Nuria Pelayo", "Midland", "Alberto Raya", "Rod Pump", "04/09/15", "04/08/16", "02/22/17", 85, 0.855],
  ["Dameon Peterson", "Midland", "Richardo Kann", "Rod Pump", "04/30/15", "07/19/15", "06/23/16", 79, 0.795],
  ["Pedro Amorim", "Reeves", "Bernd Pfeffer", "Gas Lift", "05/21/15", "09/18/15", "10/02/16", 72, 0.75],
  ["Hangakore Hariwana", "Reeves", "Marti Valencia", "Rod Pump", "06/11/15", "06/10/16", "08/04/17", 58, 0.5],
  ["Rahul Malviya", "Reeves", "Oluchi Mazi", "Gas Lift", "07/02/15", "07/01/16", "10/24/17", 74, 0.75],
] as const;

const Ring = ({ value, sweep }: { value: number; sweep: number }) => (
  <div className="mt-[2px] grid h-[70px] w-[70px] place-items-center">
    <svg className="col-start-1 row-start-1 h-[70px] w-[70px]" viewBox="0 0 70 70" fill="none">
      <circle cx="35" cy="35" r="32.500" stroke="#464646" strokeWidth="2.5" />
      <circle cx="35" cy="35" r="32.500" stroke="#0aa14b" strokeWidth="4.6" strokeLinecap="round" pathLength={100} strokeDasharray={`${sweep * 100} 100`} />
    </svg>
    <span className="col-start-1 row-start-1 text-[18.5px] leading-[24px] tracking-normal">{value}%</span>
  </div>
);

function TableWindow() {
  return (
    <div className="absolute top-[696px] left-[482px] flex h-[1272px] w-[2290px] bg-[#292929] shadow-[0_0_50px_rgba(0,0,0,0.12)]">
      <div className="flex w-[2190px] flex-col">
        <div className="flex h-[112px] justify-end border-b-[2px] border-[#cfd0d4] bg-[#f8f8f8] text-[#4a4a4a]">
          <div className="flex w-[128px] items-center justify-center border-l-[2px] border-[#c9cacf] pr-[3px] pb-[4px]">
            <MdAddAlert className="size-[50px]" />
          </div>
          <div className="flex w-[125px] items-center justify-center border-l-[2px] border-[#c9cacf] pb-[4px]">
            <MdSettings className="size-[50px]" />
          </div>
        </div>
        <div className="flex h-[98px] justify-end bg-[#f8f8f8] pt-[19px]">
          <div className="flex h-[64px] w-[64px] items-center justify-center bg-[#141b2e] pr-[2px]">
            <svg className="h-[38px] w-[20px]" viewBox="0 0 20 38" fill="none" stroke="#fff" strokeWidth="4.5">
              <path d="M18.500 1.500L3 19L18.500 36.500" />
            </svg>
          </div>
        </div>
        <div className="flex h-[208px] items-end justify-end pr-[182px] pb-[43px] text-[20.5px] leading-[32px] font-semibold tracking-[0.2px] text-[#0a8fcf]">
          <span>RECOVERY RATE</span>
          <svg className="mb-[11px] ml-[21px] h-[11px] w-[14px]" viewBox="0 0 15 11" preserveAspectRatio="none" fill="#0a8fcf">
            <path d="M0 0H15L7.500 11Z" />
          </svg>
        </div>
        <div className="h-[95.3px] bg-[#373737]" />
        <div className="h-[95.3px]" />
        {ROWS.map(([name, county, owner, lift, d1, d2, d3, value, sweep], i) => (
          <div
            key={name}
            className={`grid grid-cols-[51px_270px_151px_196px_178px_181px_268.5px_231px_253.5px_70px] items-center pl-[29px] text-[22px] leading-[30px] font-semibold tracking-[0.62px] whitespace-nowrap text-white ${i % 2 ? "" : "bg-[#373737]"} ${i === 6 ? "h-[91px]" : "h-[95.4px] pt-[2px]"}`}
          >
            <div className="mb-[2px] size-[29px] rounded-[3px] border border-[#c3c6d3] bg-white" />
            <span>{name}</span>
            <span>{county}</span>
            <span>{owner}</span>
            <span>Oil</span>
            <span>{lift}</span>
            <span>{d1}</span>
            <span>{d2}</span>
            <span>{d3}</span>
            <Ring value={value} sweep={sweep} />
          </div>
        ))}
      </div>
      <div className="flex w-[100px] items-center justify-center rounded-tl-[4px] bg-white pr-[8px] pb-[38px] shadow-[-1px_0_2px_rgba(0,0,0,0.2)]">
        <span className="rotate-180 text-[40px] leading-[44px] font-semibold tracking-[14.7px] text-[#6b7080] [writing-mode:vertical-rl]">FILTERS</span>
      </div>
    </div>
  );
}

export default function App() {
  return (
    <div className="relative h-[2048px] w-[2880px] overflow-hidden bg-[#0a8fcf] font-['Open_Sans',sans-serif]">
      <svg className="absolute inset-0 h-full w-full" viewBox="0 0 2880 2048" fill="none" stroke="#fff" strokeOpacity="0.13" strokeWidth="4">
        <path d="M2380 321L2603 475L2788 208" />
        <path d="M149 1925L230 1451L336 1655L490 1454" />
      </svg>
      <TableWindow />
      <MapWindow />
    </div>
  );
}
